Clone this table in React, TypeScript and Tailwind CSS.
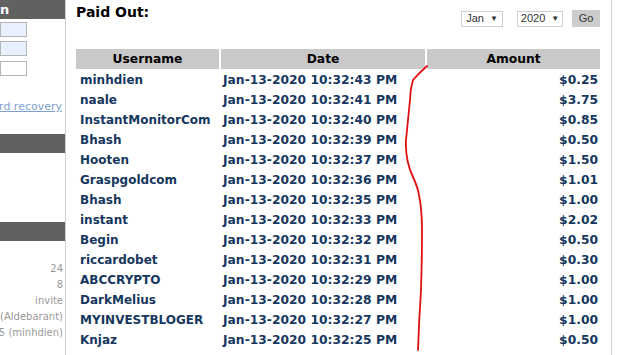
import React from "react";

const rows = [
  { user: "minhdien", date: "Jan-13-2020 10:32:43 PM", amount: "$0.25" },
  { user: "naale", date: "Jan-13-2020 10:32:41 PM", amount: "$3.75" },
  { user: "InstantMonitorCom", date: "Jan-13-2020 10:32:40 PM", amount: "$0.85" },
  { user: "Bhash", date: "Jan-13-2020 10:32:39 PM", amount: "$0.50" },
  { user: "Hooten", date: "Jan-13-2020 10:32:37 PM", amount: "$1.50" },
  { user: "Graspgoldcom", date: "Jan-13-2020 10:32:36 PM", amount: "$1.01" },
  { user: "Bhash", date: "Jan-13-2020 10:32:35 PM", amount: "$1.00" },
  { user: "instant", date: "Jan-13-2020 10:32:33 PM", amount: "$2.02" },
  { user: "Begin", date: "Jan-13-2020 10:32:32 PM", amount: "$0.50" },
  { user: "riccardobet", date: "Jan-13-2020 10:32:31 PM", amount: "$0.30" },
  { user: "ABCCRYPTO", date: "Jan-13-2020 10:32:29 PM", amount: "$1.00" },
  { user: "DarkMelius", date: "Jan-13-2020 10:32:28 PM", amount: "$1.00" },
  { user: "MYINVESTBLOGER", date: "Jan-13-2020 10:32:27 PM", amount: "$1.00" },
  { user: "Knjaz", date: "Jan-13-2020 10:32:25 PM", amount: "$0.50" },
];

const stats = ["24", "8", "invite", "(Aldebarant)", "5 (minhdien)"];

const Sidebar = () => (
  <div className="w-[66px] shrink-0 border-r border-[#cfcfcf] overflow-hidden font-['DejaVu_Sans',sans-serif]">
    <div className="h-[19px] bg-[#616161] text-white text-[13px] font-bold leading-[19px]">n</div>
    <div className="mt-[3px] w-[27px] h-[15px] border border-[#b5b5b5] bg-[#e8f0fe]" />
    <div className="mt-[4px] w-[27px] h-[15px] border border-[#b5b5b5] bg-[#e8f0fe]" />
    <div className="mt-[5px] w-[27px] h-[15px] border border-[#b5b5b5] bg-white" />
    <div className="mt-[24px] h-[14px] text-[11px] leading-[14px] text-[#7d9fd3] underline whitespace-nowrap flex justify-end pr-[3px]">
      rd recovery
    </div>
    <div className="mt-[20px] h-[19px] bg-[#616161]" />
    <div className="mt-[69px] h-[19px] bg-[#616161]" />
    <div className="mt-[20px] flex flex-col items-end pr-[2px] text-[10px] leading-[16px] text-[#999] whitespace-nowrap">
      {stats.map((s) => (
        <div key={s}>{s}</div>
      ))}
    </div>
  </div>
);

const SelectBox = ({ label, w }: { label: string; w: string }) => (
  <div
    className={`${w} h-[16px] border border-[#cfcfcf] bg-white flex items-center justify-center gap-[6px] text-[11px] text-[#333] font-['Liberation_Sans',sans-serif]`}
  >
    <span>{label}</span>
    <span className="text-[8px]">▼</span>
  </div>
);

export default function App() {
  return (
    <div className="w-[624px] h-[355px] overflow-hidden bg-white flex relative">
      <Sidebar />
      <div className="w-[546px] shrink-0 border-r border-[#cfcfcf] pl-[10px] pr-[11px] pt-[3px] font-['DejaVu_Sans',sans-serif]">
        <div className="flex justify-between items-start">
          <h2 className="text-[14px] leading-[18px] font-bold text-black">Paid Out:</h2>
          <div className="flex items-center mt-[7px]">
            <SelectBox label="Jan" w="w-[42px]" />
            <div className="ml-[14px]">
              <SelectBox label="2020" w="w-[46px]" />
            </div>
            <button className="ml-[9px] w-[28px] h-[17px] bg-[#cccccc] text-[11px] text-[#333] font-['Liberation_Sans',sans-serif]">
              Go
            </button>
          </div>
        </div>

        <div className="mt-[22px] w-[524px]">
          <div className="flex gap-[2px] h-[20px] text-[12.3px] font-bold text-black leading-[20px]">
            <div className="w-[143px] bg-[#c9c9c9] text-center">Username</div>
            <div className="w-[204px] bg-[#c9c9c9] text-center">Date</div>
            <div className="w-[173px] bg-[#c9c9c9] text-center">Amount</div>
          </div>
          <div className="pt-[1px]">
            {rows.map((r, i) => (
              <div key={i} className="flex gap-[2px] h-[20px] leading-[20px] text-[12.3px] font-bold text-[#17375e] whitespace-nowrap">
                <div className="w-[143px] pl-[4px] text-[12px]">{r.user}</div>
                <div className="w-[204px] pl-[2px]">{r.date}</div>
                <div className="w-[173px] pr-[2px] text-right">{r.amount}</div>
              </div>
            ))}
          </div>
        </div>
      </div>

      <svg className="absolute left-0 top-0 pointer-events-none" width="624" height="355">
        <path
          d="M427 66 Q420 72 413 80 Q410 90 410 100 Q408 120 406 140 Q405 160 413 177 Q418 188 419 195 Q422 210 422 230 Q422 260 421 290 Q419 320 418 350"
          fill="none"
          stroke="#e01010"
          strokeWidth="1.8"
          strokeLinecap="round"
        />
      </svg>
    </div>
  );
}
